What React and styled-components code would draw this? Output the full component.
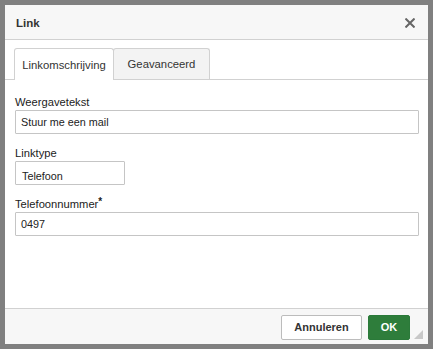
import React from "react";
import styled, { createGlobalStyle } from "styled-components";

const Global = createGlobalStyle`
  html, body { margin: 0; padding: 0; background: #808080; }
  body { font-family: "Liberation Sans", Arial, Helvetica, sans-serif; color: #222; }
  * { box-sizing: border-box; }
`;

const Page = styled.div`
  width: 433px;
  height: 349px;
  padding: 5px;
  background: #808080;
`;

const Dialog = styled.div`
  width: 423px;
  height: 339px;
  background: #fff;
  display: flex;
  flex-direction: column;
`;

const Header = styled.div`
  height: 35px;
  flex: none;
  background: #f7f7f7;
  border-bottom: 1px solid #d1d1d1;
  display: flex;
  align-items: center;
  justify-content: space-between;
  padding: 0 13px 0 11px;
`;

const Title = styled.div`
  font-size: 11.5px;
  font-weight: bold;
  color: #333;
  padding-top: 1px;
`;

const Close = styled.button`
  border: 0;
  background: none;
  padding: 0;
  width: 10px;
  height: 10px;
  display: flex;
  margin-top: 2px;
`;

const Body = styled.div`
  flex: 1;
  display: flex;
  flex-direction: column;
  padding-top: 8px;
`;

const TabBar = styled.div`
  display: flex;
  padding-left: 9px;
  border-bottom: 1px solid #d1d1d1;
  height: 32px;
`;

const Tab = styled.div`
  width: ${(p) => p.$w}px;
  display: flex;
  align-items: center;
  justify-content: center;
  font-size: 11.3px;
  color: #333;
  border: 1px solid #d1d1d1;
  border-bottom: 0;
  border-radius: 3px 3px 0 0;
  margin-right: -1px;
  background: ${(p) => (p.$active ? "#fff" : "#f3f3f3")};
  height: ${(p) => (p.$active ? "32px" : "31px")};
  position: relative;
  z-index: ${(p) => (p.$active ? 1 : 0)};
`;

const Form = styled.div`
  display: flex;
  flex-direction: column;
  gap: 12px;
  padding: 15px 9px 0 10px;
`;

const Field = styled.div`
  display: flex;
  flex-direction: column;
  gap: 1px;
`;

const Label = styled.label`
  font-size: 11.2px;
  line-height: 14px;
  color: #222;
`;

const Star = styled.sup`
  font-size: 10px;
  font-weight: bold;
  vertical-align: top;
  line-height: 10px;
`;

const Input = styled.div`
  height: 24px;
  width: ${(p) => p.$w || "100%"};
  border: 1px solid #c5c5c5;
  border-radius: 1px;
  font-size: 10.8px;
  padding: ${(p) => p.$pt || 5}px 5px 0 ${(p) => p.$pl || 5}px;
  color: #222;
  background: #fff;
`;

const Footer = styled.div`
  height: 36px;
  flex: none;
  border-top: 1px solid #d1d1d1;
  background: #f7f7f7;
  display: flex;
  justify-content: flex-end;
  align-items: center;
  gap: 6px;
  padding: 0 18px 0 0;
  position: relative;
`;

const Button = styled.button`
  height: 25px;
  width: ${(p) => p.$w}px;
  padding: 0;
  border-radius: 2px;
  font-family: inherit;
  font-size: 11px;
  font-weight: bold;
  border: 1px solid ${(p) => (p.$primary ? "#2b7a3a" : "#bcbcbc")};
  background: ${(p) => (p.$primary ? "#2e7d3b" : "#fff")};
  color: ${(p) => (p.$primary ? "#fff" : "#333")};
  margin-top: 1px;
`;

const Grip = styled.div`
  position: absolute;
  right: 5px;
  bottom: 5px;
  width: 0;
  height: 0;
  border-left: 9px solid transparent;
  border-bottom: 9px solid #c8c8c8;
`;

export default function App() {
  return (
    <>
      <Global />
      <Page>
        <Dialog>
          <Header>
            <Title>Link</Title>
            <Close aria-label="Sluiten">
              <svg width="10" height="10" viewBox="0 0 10 10">
                <path d="M1.2 1.2 L8.8 8.8 M8.8 1.2 L1.2 8.8" stroke="#666" strokeWidth="2" strokeLinecap="square" />
              </svg>
            </Close>
          </Header>
          <Body>
            <TabBar>
              <Tab $active $w={100}>Linkomschrijving</Tab>
              <Tab $w={97}>Geavanceerd</Tab>
            </TabBar>
            <Form>
              <Field>
                <Label>Weergavetekst</Label>
                <Input>Stuur me een mail</Input>
              </Field>
              <Field>
                <Label>Linktype</Label>
                <Input $w="110px" $pt={8} $pl={6}>Telefoon</Input>
              </Field>
              <Field>
                <Label>Telefoonnummer<Star>*</Star></Label>
                <Input>0497</Input>
              </Field>
            </Form>
          </Body>
          <Footer>
            <Button $w={81}>Annuleren</Button>
            <Button $primary $w={42}>OK</Button>
            <Grip />
          </Footer>
        </Dialog>
      </Page>
    </>
  );
}
